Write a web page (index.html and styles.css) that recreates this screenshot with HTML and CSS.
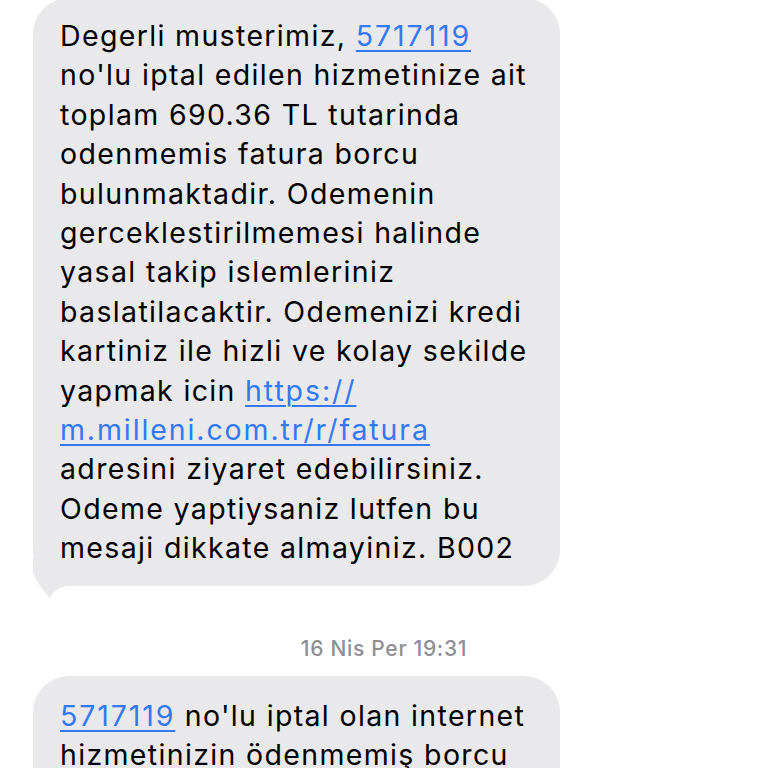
FILE: index.html
```html
<!DOCTYPE html>
<html lang="tr">
<head>
<meta charset="utf-8">
<link rel="stylesheet" href="styles.css">
</head>
<body>
<div class="thread">
  <div class="bubble first">
    <p class="msg">Degerli musterimiz, <a class="link">5717119</a><br>no'lu iptal edilen hizmetinize ait<br>toplam 690.36 TL tutarinda<br>odenmemis fatura borcu<br>bulunmaktadir. Odemenin<br>gerceklestirilmemesi halinde<br>yasal takip islemleriniz<br>baslatilacaktir. Odemenizi kredi<br>kartiniz ile hizli ve kolay sekilde<br>yapmak icin <a class="link">https://<br>m.milleni.com.tr/r/fatura</a><br>adresini ziyaret edebilirsiniz.<br>Odeme yaptiysaniz lutfen bu<br>mesaji dikkate almayiniz. B002</p>
    <svg class="tail" width="46" height="41" viewBox="0 0 46 41"><path d="M0 0 L0 15 C4 24 10 33 17 40 C20 34 26 29 36 27.5 L46 27.5 L46 0 Z" fill="#e9e9eb"/></svg>
  </div>
  <div class="stamp">16 Nis Per 19:31</div>
  <div class="bubble second">
    <p class="msg"><a class="link">5717119</a> no'lu iptal olan internet<br>hizmetinizin ödenmemiş borcu<br>bulunmaktadır.</p>
  </div>
</div>
</body>
</html>
```

FILE: styles.css
```css
html, body {
  margin: 0;
  padding: 0;
  background: #ffffff;
  height: 768px;
  overflow: hidden;
}
.thread {
  display: flex;
  flex-direction: column;
  align-items: flex-start;
  padding-left: 33px;
}
.bubble {
  position: relative;
  background: #e9e9eb;
  border-radius: 36px;
  width: 527px;
  box-sizing: border-box;
  padding: 18px 20px 18px 27px;
}
.bubble.first {
  margin-top: -2px;
}
.bubble.second {
  padding-top: 20px;
}
.msg {
  margin: 0;
  font-family: "Inter", "Liberation Sans", sans-serif;
  font-size: 28.5px;
  line-height: 39.4px;
  color: #000000;
  letter-spacing: 1.35px;
  white-space: nowrap;
}
.link {
  color: #3478f6;
  text-decoration: underline;
  text-decoration-thickness: 2px;
  text-underline-offset: 4px;
  letter-spacing: 1.9px;
}
.tail {
  position: absolute;
  left: 0;
  bottom: -13px;
}
.stamp {
  align-self: stretch;
  margin-left: -33px;
  text-align: center;
  font-family: "Inter", "Liberation Sans", sans-serif;
  font-size: 21px;
  letter-spacing: 0.7px;
  color: #8e8e93;
  margin-top: 50px;
  margin-bottom: 15px;
  font-weight: 500;
}
```
